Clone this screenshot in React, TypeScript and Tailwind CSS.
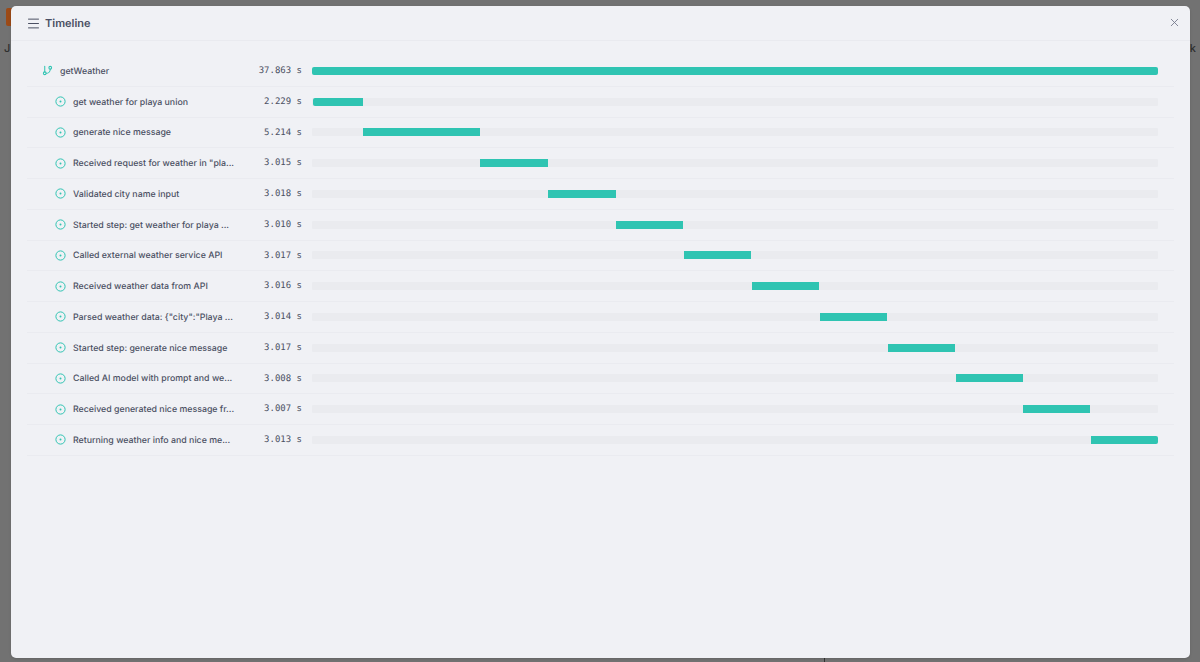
import { Menu, X, GitBranch } from "lucide-react";

type Row = { name: string; time: string; left: number; right: number };

const TRACK_LEFT = 312;

const rows: Row[] = [
  { name: "get weather for playa union", time: "2.229", left: 312.5, right: 362.5 },
  { name: "generate nice message", time: "5.214", left: 363, right: 479.5 },
  { name: 'Received request for weather in "pla...', time: "3.015", left: 480, right: 547.5 },
  { name: "Validated city name input", time: "3.018", left: 548, right: 615.5 },
  { name: "Started step: get weather for playa ...", time: "3.010", left: 616, right: 683 },
  { name: "Called external weather service API", time: "3.017", left: 684, right: 751 },
  { name: "Received weather data from API", time: "3.016", left: 752, right: 819 },
  { name: 'Parsed weather data: {"city":"Playa ...', time: "3.014", left: 820, right: 887 },
  { name: "Started step: generate nice message", time: "3.017", left: 888, right: 955 },
  { name: "Called AI model with prompt and we...", time: "3.008", left: 955.5, right: 1022.5 },
  { name: "Received generated nice message fr...", time: "3.007", left: 1023, right: 1090 },
  { name: "Returning weather info and nice me...", time: "3.013", left: 1091, right: 1158 },
];

function StepIcon() {
  return (
    <svg width="11" height="11" viewBox="0 0 11 11" fill="none" className="shrink-0">
      <circle cx="5.5" cy="5.5" r="4.6" stroke="#2fc4b2" strokeWidth="1" />
      <circle cx="5.5" cy="5.5" r="1" fill="#2fc4b2" />
    </svg>
  );
}

function Time({ value }: { value: string }) {
  return (
    <div className="w-[66px] shrink-0 pt-[2px] text-right font-['DejaVu_Sans_Mono',monospace] text-[9px] text-[#4b5063]">
      {value} s
    </div>
  );
}

export default function App() {
  return (
    <div className="relative h-[662px] w-[1200px] overflow-hidden bg-[#727272] font-['Inter',sans-serif] [text-rendering:geometricPrecision]">
      <div className="flex h-[40px] items-start pl-[6px] pt-[8px]">
        <div className="h-[18px] w-[10px] rounded-l-[2px] bg-[#9c4a17]" />
      </div>
      <div className="flex items-center justify-between px-[4px] text-[11px] font-medium text-[#2f2f2f]">
        <span>J</span>
        <span>k</span>
      </div>
      <div className="absolute bottom-0 left-[824px] h-[4px] w-px bg-[#333333]" />

      <div className="absolute bottom-[4px] left-[11px] right-[10px] top-[6px] rounded-[5px] bg-[#f0f1f5] shadow-sm">
        <div className="flex h-[35px] items-center border-b border-[#e9eaef] pl-[14.5px] pr-[9.5px]">
          <Menu size={15} strokeWidth={1.6} className="shrink-0 text-[#4b5063]" />
          <span className="ml-[4.5px] text-[11px] font-semibold text-[#4a4f63]">Timeline</span>
          <X size={13} strokeWidth={1.6} className="mb-[2px] ml-auto text-[#73778a]" />
        </div>

        <div className="mx-[16px] mt-[15px]">
          <div className="flex h-[30.75px] items-center border-b border-[#eaebf0] pl-[15px] pr-[15px]">
            <GitBranch size={11} strokeWidth={2.2} className="shrink-0 text-[#2fc4b2]" />
            <div className="ml-[7px] w-[176px] shrink-0 whitespace-nowrap pt-[1px] text-[8.8px] font-medium text-[#4b5063]">getWeather</div>
            <Time value="37.863" />
            <div className="ml-[10px] h-[8px] w-[846px] shrink-0 rounded-[2px] bg-[#2fc4b2]" />
          </div>
          {rows.map((r, i) => (
            <div key={r.name} className="flex h-[30.75px] items-center border-b border-[#eaebf0] pl-[28px] pr-[15px]">
              <StepIcon />
              <div className="ml-[7px] w-[163px] shrink-0 whitespace-nowrap pt-[1px] text-[8.8px] font-medium text-[#4b5063]">{r.name}</div>
              <Time value={r.time} />
              <div className="relative ml-[10px] h-[8px] w-[846px] shrink-0 rounded-[1px] bg-[#eaebef]">
                <div
                  className={
                    i === 0
                      ? "absolute top-0 h-full rounded-l-[2px] bg-[#2fc4b2]"
                      : i === rows.length - 1
                        ? "absolute top-0 h-full rounded-r-[2px] bg-[#2fc4b2]"
                        : "absolute top-0 h-full bg-[#2fc4b2]"
                  }
                  style={{ left: r.left - TRACK_LEFT, width: r.right - r.left }}
                />
              </div>
            </div>
          ))}
        </div>
      </div>
    </div>
  );
}
